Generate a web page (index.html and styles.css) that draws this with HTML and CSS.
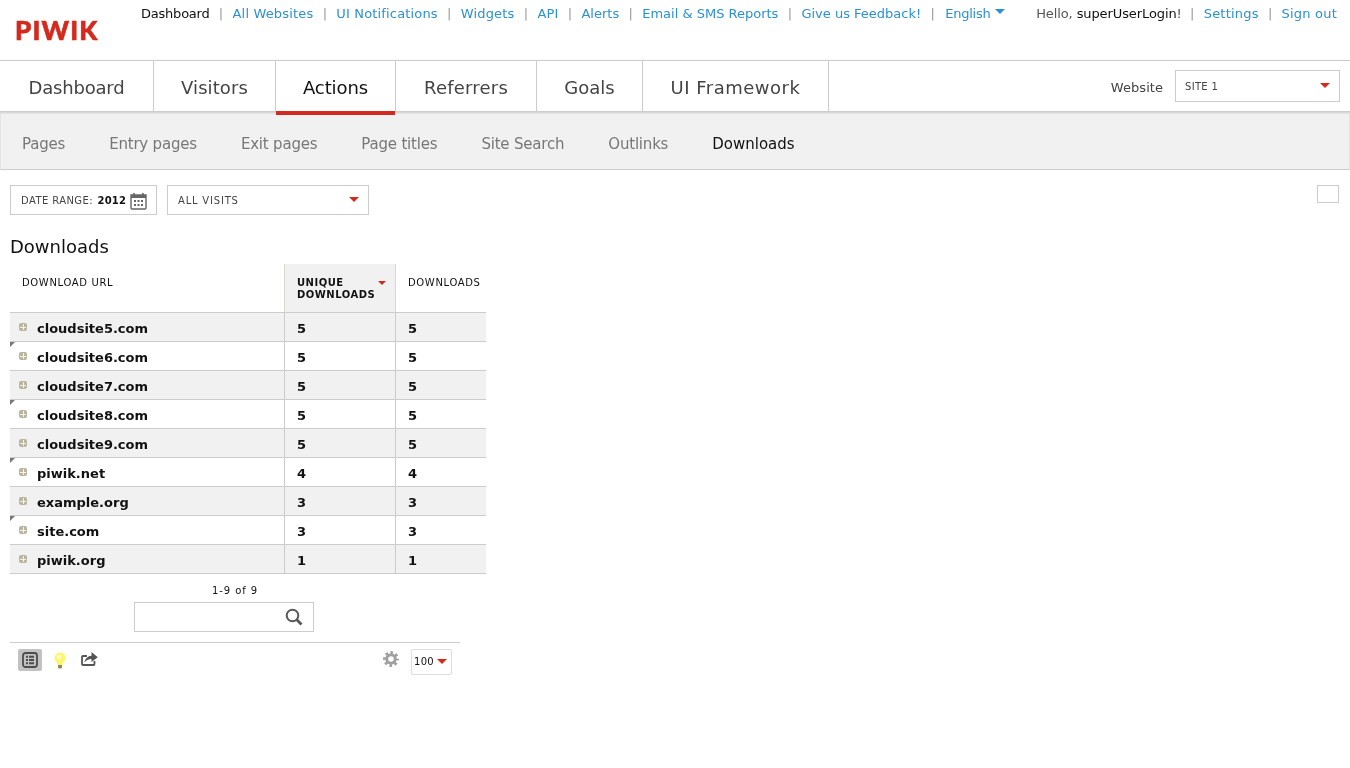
FILE: index.html
```html
<!DOCTYPE html>
<html lang="en">
<head>
<meta charset="utf-8">
<title>Piwik - Downloads</title>
<link rel="stylesheet" href="styles.css">
</head>
<body>
<header class="top">
  <div class="logo">PIWIK</div>
  <nav class="topmenu">
    <span class="cur tight">Dashboard</span><i>|</i><a class="wide">All Websites</a><i>|</i><a class="wide">UI Notifications</a><i>|</i><a class="wide">Widgets</a><i>|</i><a class="wide">API</a><i>|</i><a>Alerts</a><i>|</i><a>Email &amp; SMS Reports</a><i>|</i><a>Give us Feedback!</a><i>|</i><a class="lang tight">English<b class="langcaret"></b></a>
  </nav>
  <nav class="usermenu">
    <span class="hello">Hello, <span class="cur">superUserLogin</span>!</span><i>|</i><a class="wider">Settings</a><i>|</i><a class="wider">Sign out</a>
  </nav>
</header>
<div class="mainbar">
  <ul class="tabs">
    <li class="t1">Dashboard</li>
    <li class="t2">Visitors</li>
    <li class="t3 active">Actions</li>
    <li class="t4">Referrers</li>
    <li class="t5">Goals</li>
    <li class="t6">UI Framework</li>
  </ul>
  <div class="site">
    <span class="sitelabel">Website</span>
    <div class="sitebox"><span>SITE 1</span><b class="caret"></b></div>
  </div>
</div>
<ul class="subnav">
  <li>Pages</li><li>Entry pages</li><li>Exit pages</li><li>Page titles</li><li>Site Search</li><li>Outlinks</li><li class="on">Downloads</li>
</ul>
<div class="filters">
  <div class="datebox">DATE RANGE: <b>2012</b>
    <svg class="cal" width="17" height="18" viewBox="0 0 17 18"><path d="M1 3h15v13a1 1 0 0 1-1 1H2a1 1 0 0 1-1-1z" fill="none" stroke="#666" stroke-width="1.4"/><path d="M1 3h15v3H1z" fill="#666"/><path d="M4 1v3M13 1v3" stroke="#666" stroke-width="1.6"/><path d="M4 8h2v2H4zM7.500 8h2v2h-2zM11 8h2v2h-2zM4 12h2v2H4zM7.500 12h2v2h-2zM11 12h2v2h-2z" fill="#666"/></svg>
  </div>
  <div class="segbox"><span>ALL VISITS</span><b class="caret"></b></div>
  <div class="spacer"></div>
  <div class="emptybox"></div>
</div>
<h2 class="title">Downloads</h2>
<table class="data">
  <thead>
    <tr><th class="c1">DOWNLOAD URL</th><th class="c2 sorted"><span>UNIQUE DOWNLOADS</span><b class="smallcaret"></b></th><th class="c3">DOWNLOADS</th></tr>
  </thead>
  <tbody>
    <tr class="odd"><td class="lbl"><b class="plus"></b>cloudsite5.com</td><td>5</td><td>5</td></tr>
    <tr><td class="lbl"><b class="mark"></b><b class="plus"></b>cloudsite6.com</td><td>5</td><td>5</td></tr>
    <tr class="odd"><td class="lbl"><b class="plus"></b>cloudsite7.com</td><td>5</td><td>5</td></tr>
    <tr><td class="lbl"><b class="mark"></b><b class="plus"></b>cloudsite8.com</td><td>5</td><td>5</td></tr>
    <tr class="odd"><td class="lbl"><b class="plus"></b>cloudsite9.com</td><td>5</td><td>5</td></tr>
    <tr><td class="lbl"><b class="mark"></b><b class="plus"></b>piwik.net</td><td>4</td><td>4</td></tr>
    <tr class="odd"><td class="lbl"><b class="plus"></b>example.org</td><td>3</td><td>3</td></tr>
    <tr><td class="lbl"><b class="mark"></b><b class="plus"></b>site.com</td><td>3</td><td>3</td></tr>
    <tr class="odd"><td class="lbl"><b class="plus"></b>piwik.org</td><td>1</td><td>1</td></tr>
  </tbody>
</table>
<div class="pager">1-9 of 9</div>
<div class="search">
  <svg width="18" height="18" viewBox="0 0 18 18"><circle cx="7.500" cy="7.500" r="5.800" fill="none" stroke="#585858" stroke-width="2"/><path d="M11.800 11.800l4.700 4.700" stroke="#585858" stroke-width="2.800"/></svg>
</div>
<div class="foot">
  <div class="fbtn on">
    <svg width="16" height="16" viewBox="0 0 16 16"><rect x="1" y="1" width="14" height="14" rx="2.500" fill="none" stroke="#4c4c4c" stroke-width="1.800"/><path d="M4 3.800h2v2H4zM4 7h2v2H4zM4 10.200h2v2H4zM7 3.800h5v2H7zM7 7h5v2H7zM7 10.200h5v2H7z" fill="#4c4c4c"/></svg>
  </div>
  <div class="fbtn bulb">
    <svg width="12" height="17" viewBox="0 0 12 17"><path d="M6 .5a5.500 5.500 0 0 0-3.500 9.700c.7.7 1 1.600 1 2.800h5c0-1.200.3-2.100 1-2.800A5.500 5.500 0 0 0 6 .5z" fill="#fdf56a"/><circle cx="5" cy="5" r="2.300" fill="#fffcd0"/><path d="M4 13h4v2.500L7 16.500H5L4 15.500z" fill="#8f8a60"/></svg>
  </div>
  <div class="fbtn share">
    <svg width="17" height="15" viewBox="0 0 17 15"><path d="M6 5H2a1 1 0 0 0-1 1v7a1 1 0 0 0 1 1h10.500a1 1 0 0 0 1-1v-3" fill="none" stroke="#555" stroke-width="1.800"/><path d="M3.500 11.500C4 7.500 7 5 10.500 4.800V1L16.800 6.200 10.500 11V8C7.500 8 5 9.200 3.500 11.500z" fill="#555"/></svg>
  </div>
  <div class="spacer"></div>
  <svg class="gear" width="16" height="16" viewBox="0 0 16 16"><circle cx="8" cy="8" r="6.400" fill="none" stroke="#a0a0a0" stroke-width="3" stroke-dasharray="2.510 2.510" stroke-dashoffset="1.255"/><circle cx="8" cy="8" r="4.300" fill="none" stroke="#a0a0a0" stroke-width="3"/></svg>
  <div class="limit"><span>100</span><b class="caret"></b></div>
</div>
</body>
</html>
```
FILE: styles.css
```css
html { margin: 0; padding: 0; background: #fff; }
body { margin: 0; padding: 0; font-family: "DejaVu Sans", Verdana, sans-serif; color: #000; height: 768px; overflow: hidden; will-change: transform; }
ul { list-style: none; margin: 0; padding: 0; }
.top { height: 60px; position: relative; display: flex; }
.logo { font-family: Lato, "Liberation Sans", sans-serif; font-weight: 900; font-size: 26px; line-height: 30px; color: #d4291f; width: 141px; padding: 15px 0 0 15px; box-sizing: border-box; letter-spacing: 1.2px; -webkit-text-stroke: 0.6px #d4291f; }
.topmenu, .usermenu { font-size: 13px; line-height: 16px; padding-top: 6px; white-space: nowrap; color: #444; display: flex; }
.topmenu a, .usermenu a { color: #2b91d0; }
.topmenu i, .usermenu i { font-style: normal; color: #999; width: 23px; text-align: center; }
.wide { letter-spacing: 0.16px; }
.wider { letter-spacing: 0.2px; }
.tight { letter-spacing: -0.22px; }
.cur { color: #111; }
.hello { color: #555; letter-spacing: -0.1px; margin-right: -1px; }
.lang { position: relative; padding-right: 14px; margin-left: 1px; }
.langcaret { position: absolute; right: 0; top: 3px; border: 5px solid transparent; border-top: 5px solid #2b91d0; border-bottom: 0; }
.usermenu { margin-left: auto; padding-right: 13px; }
.mainbar { height: 50px; border-top: 1px solid #ccc; border-bottom: 1px solid #ccc; box-shadow: 0 1px 2px #ccc; display: flex; position: relative; background: #fff; }
.tabs { display: flex; height: 50px; }
.tabs li { font-size: 18px; line-height: 53px; color: #444; text-align: center; border-right: 1px solid #ccc; box-sizing: border-box; position: relative; }
.t1 { width: 154px; letter-spacing: -0.2px; }
.t2 { width: 122px; letter-spacing: 0.1px; }
.t3 { width: 120px; letter-spacing: -0.1px; }
.t4 { width: 141px; letter-spacing: 0.2px; }
.t5 { width: 106px; }
.t6 { width: 186px; letter-spacing: 0.5px; }
.tabs .active { color: #111; }
.active::after { content: ""; position: absolute; left: 0; right: 0; bottom: -4px; height: 4px; background: #d4291f; }
.site { margin-left: auto; display: flex; align-items: flex-start; padding: 9px 10px 0 0; }
.sitelabel { font-size: 13px; line-height: 36px; color: #444; margin-right: 12px; letter-spacing: 0.05px; }
.sitebox { width: 165px; height: 32px; border: 1px solid #ccc; box-sizing: border-box; font-size: 10px; line-height: 32px; letter-spacing: 0.3px; color: #444; padding: 0 9px; position: relative; }
.caret { position: absolute; right: 9px; top: 12px; border: 5px solid transparent; border-top: 5px solid #d4291f; border-bottom: 0; }
.subnav { height: 58px; box-sizing: border-box; background: #f1f1f1; border: 1px solid #e4e4e4; border-bottom-color: #ccc; border-top: 0; display: flex; padding: 2px 0 0 21px; font-size: 15px; letter-spacing: -0.2px; line-height: 60px; color: #777; gap: 44px; }
.subnav .on { color: #111; letter-spacing: 0; }
.filters { display: flex; padding: 15px 11px 0 10px; height: 30px; }
.datebox { width: 147px; height: 30px; border: 1px solid #ccc; box-sizing: border-box; font-size: 10px; letter-spacing: 0.4px; line-height: 30px; color: #444; padding-left: 10px; position: relative; white-space: nowrap; }
.datebox b { color: #111; letter-spacing: 0.2px; margin-left: 1px; }
.cal { position: absolute; left: 119px; top: 6px; }
.segbox { width: 202px; height: 30px; border: 1px solid #ccc; box-sizing: border-box; margin-left: 10px; font-size: 10px; letter-spacing: 0.8px; line-height: 30px; color: #444; padding-left: 10px; position: relative; }
.segbox .caret { top: 11px; }
.spacer { flex: 1; }
.emptybox { width: 22px; height: 18px; border: 1px solid #ccc; box-sizing: border-box; }
.title { font-size: 18px; font-weight: normal; line-height: 22px; margin: 21px 0 6px 10px; color: #111; }
.data { border-collapse: separate; border-spacing: 0; width: 476px; margin-left: 10px; table-layout: fixed; }
.data th { font-size: 10px; letter-spacing: 0.65px; font-weight: normal; text-align: left; vertical-align: top; height: 49px; box-sizing: border-box; padding: 13px 12px 0; line-height: 12px; border-bottom: 1px solid #ccc; color: #111; position: relative; }
.c1 { width: 274px; }
.c2 { width: 112px; }
.data .sorted { background: #f1f1f1; border-left: 1px solid #d8d8d0; border-right: 1px solid #d8d8d0; font-weight: bold; letter-spacing: 0.5px; }
.sorted span { display: block; width: 80px; }
.smallcaret { position: absolute; right: 9px; top: 17px; border: 4px solid transparent; border-top: 4px solid #d4291f; border-bottom: 0; }
.data td { font-size: 13px; font-weight: bold; height: 29px; box-sizing: border-box; padding: 4px 12px 0; line-height: 18px; border-bottom: 1px solid #ccc; color: #111; }
.data td:nth-child(2) { border-left: 1px solid #ccc; border-right: 1px solid #ccc; }
.data td.lbl { padding-left: 27px; position: relative; }
.odd td { background: #f1f1f1; }
.plus { position: absolute; left: 9px; top: 10px; width: 8px; height: 8px; background: #b9b59f; border-radius: 2px; }
.plus::before { content: ""; position: absolute; left: 1px; top: 3.500px; width: 6px; height: 1px; background: #f4f4ee; }
.plus::after { content: ""; position: absolute; left: 3.500px; top: 1px; width: 1px; height: 6px; background: #f4f4ee; }
.mark { position: absolute; left: 0; top: 0; border-top: 5px solid #777; border-right: 5px solid transparent; }
.pager { font-size: 10px; line-height: 12px; letter-spacing: 0.9px; text-align: center; width: 450px; margin: 11px 0 0 10px; color: #111; }
.search { width: 180px; height: 30px; margin: 5px 0 0 134px; border: 1px solid #ccc; box-sizing: border-box; display: flex; align-items: center; justify-content: flex-end; padding: 0 10px; }
.foot { width: 450px; margin: 10px 0 0 10px; border-top: 1px solid #ccc; display: flex; align-items: flex-start; padding: 6px 8px 0 8px; box-sizing: border-box; height: 40px; gap: 6px; }
.fbtn { width: 24px; height: 22px; display: flex; align-items: center; justify-content: center; border-radius: 2px; }
.fbtn.on { background: #c2c2c2; }
.share { margin-left: -1px; align-items: flex-start; padding-top: 2px; box-sizing: border-box; }
.gear { margin: 2px 6px 0 0; }
.limit { width: 41px; height: 26px; border: 1px solid #ddd; border-radius: 2px; box-sizing: border-box; font-size: 10px; line-height: 24px; letter-spacing: 0.3px; padding-left: 2px; position: relative; color: #111; }
.limit .caret { right: 4px; top: 9px; }
```
